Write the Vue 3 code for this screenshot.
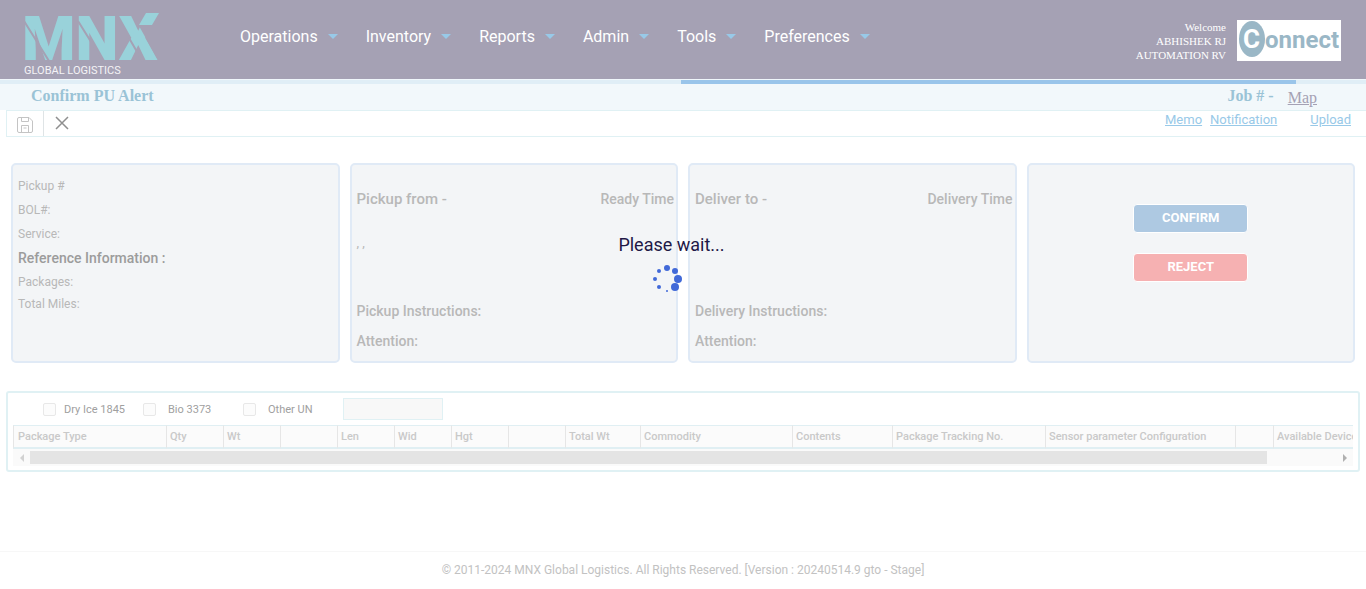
<script setup>
import { ref } from 'vue'

const menu = ['Operations', 'Inventory', 'Reports', 'Admin', 'Tools', 'Preferences']
const columns = [
  { label: 'Package Type', width: 153 },
  { label: 'Qty', width: 57 },
  { label: 'Wt', width: 57 },
  { label: '', width: 57 },
  { label: 'Len', width: 57 },
  { label: 'Wid', width: 57 },
  { label: 'Hgt', width: 57 },
  { label: '', width: 57 },
  { label: 'Total Wt', width: 75 },
  { label: 'Commodity', width: 152 },
  { label: 'Contents', width: 100 },
  { label: 'Package Tracking No.', width: 153 },
  { label: 'Sensor parameter Configuration', width: 190 },
  { label: '', width: 38 },
  { label: 'Available Devices', width: 152 },
]
const stops = [
  { title: 'Pickup from -', time: 'Ready Time', address: ', ,', instructions: 'Pickup Instructions:' },
  { title: 'Deliver to -', time: 'Delivery Time', address: '', instructions: 'Delivery Instructions:' },
]
const dots = [
  { x: 14, y: 4, r: 3 },
  { x: 22, y: 7, r: 3 },
  { x: 25, y: 15, r: 4 },
  { x: 22, y: 23, r: 4 },
  { x: 14, y: 27, r: 1 },
  { x: 6, y: 23, r: 2 },
  { x: 2, y: 15, r: 2 },
  { x: 6, y: 7, r: 2 },
]
const otherUn = ref('')
</script>

<template>
  <div class="page">
    <header class="header">
      <svg class="logo" width="150" height="79" viewBox="-5 -10 150 79" role="img" aria-label="MNX Global Logistics">
        <text class="logo-name" x="-3" y="50">MNX</text>
        <path class="logo-cut" d="M-1 11 L24 51 M53 11 L78 51 M104 28 L118 52" />
        <path class="logo-gap" d="M109 0 V7 L133 50 H142 V0 Z" />
        <path class="logo-accent" d="M121 3 H134 L127 15 H114 Z" />
        <text class="logo-sub" x="-1" y="64">GLOBAL LOGISTICS</text>
      </svg>
      <nav class="menu">
        <a v-for="item in menu" :key="item" href="#" class="menu-item">{{ item }}<span class="caret"></span></a>
      </nav>
      <div class="user">
        <div>Welcome</div>
        <div>ABHISHEK RJ</div>
        <div>AUTOMATION RV</div>
      </div>
      <svg class="brand" width="104" height="41" viewBox="0 0 104 41" role="img" aria-label="Connect">
        <rect width="104" height="41" fill="#fff" />
        <ellipse cx="15" cy="19" rx="13" ry="18" fill="#9ab7c6" />
        <text class="brand-c" x="6" y="28">C</text>
        <text class="brand-text" x="28" y="28">onnect</text>
      </svg>
    </header>

    <div class="progress"><div class="progress-bar"></div></div>

    <div class="titlebar">
      <h1 class="title">Confirm PU Alert</h1>
      <span class="job">Job # -</span>
      <a href="#" class="map">Map</a>
    </div>

    <div class="toolbar">
      <button class="tool save" type="button" aria-label="Save">
        <svg width="16" height="16" viewBox="0 0 16 16" fill="none" stroke="#c4c4c4">
          <path d="M2 .5 H12 L15.5 4 V14 Q15.5 15.500 14 15.500 H2 Q.5 15.500 .5 14 V2 Q.5 .5 2 .5 Z M4.500 .5 V4.500 H11.500 V.5 M4.500 15.500 V8.500 H11.500 V15.500 M6.500 11 H9.500" />
        </svg>
      </button>
      <button class="tool close" type="button" aria-label="Close">
        <svg width="14" height="14" viewBox="0 0 14 14" fill="none" stroke="#8f8f8f" stroke-width="1.500">
          <path d="M1 1 L13 13 M13 1 L1 13" />
        </svg>
      </button>
      <div class="links">
        <a href="#">Memo</a>
        <a href="#">Notification</a>
        <a href="#" class="upload">Upload</a>
      </div>
    </div>

    <main>
      <section class="cards">
        <div class="card summary">
          <div>Pickup #</div>
          <div>BOL#:</div>
          <div>Service:</div>
          <div class="reference">Reference Information :</div>
          <div>Packages:</div>
          <div class="miles">Total Miles:</div>
        </div>
        <div v-for="stop in stops" :key="stop.title" class="card stop">
          <div class="stop-head">
            <span class="stop-title">{{ stop.title }}</span>
            <span>{{ stop.time }}</span>
          </div>
          <div class="address">{{ stop.address }}</div>
          <div class="stop-line">{{ stop.instructions }}</div>
          <div class="stop-line">Attention:</div>
        </div>
        <div class="card actions">
          <button type="button" class="action confirm">CONFIRM</button>
          <button type="button" class="action reject">REJECT</button>
        </div>
      </section>

      <section class="packages">
        <div class="options">
          <label class="dry"><input type="checkbox" />Dry Ice 1845</label>
          <label class="bio"><input type="checkbox" />Bio 3373</label>
          <label class="other"><input type="checkbox" />Other UN</label>
          <input v-model="otherUn" class="un" type="text" aria-label="Other UN number" />
        </div>
        <div class="table-wrap">
          <table class="table">
            <colgroup>
              <col v-for="(c, i) in columns" :key="i" :style="{ width: c.width + 'px' }" />
            </colgroup>
            <thead>
              <tr>
                <th v-for="(c, i) in columns" :key="i" scope="col">{{ c.label }}</th>
              </tr>
            </thead>
          </table>
        </div>
        <div class="scrollbar">
          <span class="arrow left"></span>
          <div class="track"><div class="thumb"></div></div>
          <span class="arrow right"></span>
        </div>
      </section>
    </main>

    <footer class="footer">© 2011-2024 MNX Global Logistics. All Rights Reserved. [Version : 20240514.9 gto - Stage]</footer>

    <div class="overlay" role="status">
      <div class="wait">Please wait...</div>
      <svg width="30" height="30" viewBox="0 0 30 30" fill="#4169d8">
        <circle v-for="(d, i) in dots" :key="i" :cx="d.x" :cy="d.y" :r="d.r" />
      </svg>
    </div>
  </div>
</template>

<style>
body {
  margin: 0;
  background: #fff;
}
</style>

<style scoped>
.page {
  position: relative;
  min-height: 100vh;
  display: flex;
  flex-direction: column;
  overflow: hidden;
  font-family: Roboto, "Liberation Sans", sans-serif;
  font-size: 12px;
  color: #b8b8b8;
}
.page * {
  box-sizing: border-box;
}
.header {
  display: flex;
  align-items: flex-start;
  height: 79px;
  padding: 0 25px 0 20px;
  background: #a5a1b4;
}
.logo {
  flex: none;
}
.logo-name {
  font: 900 61px Roboto, sans-serif;
  fill: #99d2da;
}
.logo-cut {
  stroke: #a5a1b4;
  stroke-width: 2;
}
.logo-gap {
  fill: #a5a1b4;
}
.logo-accent {
  fill: #99d2da;
}
.logo-sub {
  font: 400 11px Roboto, sans-serif;
  fill: #f4f3f6;
}
.menu {
  display: flex;
  gap: 28px;
  margin: 26px auto 0 70px;
}
.menu-item {
  display: flex;
  align-items: center;
  color: #fff;
  font-size: 16px;
  line-height: 21px;
  text-decoration: none;
}
.caret {
  margin-left: 10px;
  border: 5px solid transparent;
  border-top-color: #98c9e8;
  border-bottom-width: 0;
}
.user {
  margin: 20px 11px 0 0;
  color: #fff;
  text-align: right;
  font: 11px/14px "Liberation Serif", serif;
}
.brand {
  margin-top: 20px;
  flex: none;
}
.brand-c {
  font: bold 26px Roboto, sans-serif;
  fill: #fff;
}
.brand-text {
  font: bold 24px Roboto, sans-serif;
  fill: #9ab7c6;
}
.progress {
  height: 5px;
  border-top: 1px solid #f0f7fb;
  background: #e0eef6;
}
.progress-bar {
  width: 45%;
  height: 4px;
  margin-left: 49.870%;
  background: #9ac5ea;
}
.titlebar {
  display: flex;
  height: 26px;
  padding: 0 49px 0 31px;
  background: #f2f8fb;
  color: #9ac3d6;
  font: 16px/24px "Liberation Serif", serif;
}
.title {
  margin: 0 auto 0 0;
  font: inherit;
  font-weight: bold;
}
.job {
  margin-right: 14px;
  font-weight: bold;
}
.map {
  line-height: 28px;
  color: #a5a1b4;
}
.toolbar {
  display: flex;
  height: 27px;
  margin-left: 6px;
  border: solid #e0f1f4;
  border-width: 1px 0 1px 1px;
}
.tool {
  width: 37px;
  padding: 0;
  border: 0;
  background: none;
  display: flex;
  align-items: center;
  justify-content: center;
}
.save {
  padding-top: 3px;
  border-right: 1px solid #dfe4e6;
}
.close {
  padding: 0 1px 1px 0;
}
.links {
  display: flex;
  gap: 8px;
  margin-left: auto;
  padding-right: 15px;
  font-size: 13px;
  line-height: 17px;
}
.links a {
  color: #98c9e8;
}
.links .upload {
  margin-left: 25px;
}
.cards {
  display: grid;
  grid-template-columns: repeat(4, 1fr);
  gap: 10px;
  padding: 26px 11px 28px;
}
.card {
  min-height: 200px;
  border: 2px solid #e0eaf6;
  border-radius: 5px;
  background: #f3f5f7;
}
.summary {
  padding: 9px 5px;
  line-height: 24px;
}
.reference {
  font-size: 14px;
  font-weight: 500;
  color: #9c9c9c;
}
.miles {
  line-height: 20px;
}
.stop {
  padding: 24px 2px 0 5px;
  font-size: 14px;
  font-weight: 500;
  line-height: 20px;
}
.stop-head {
  display: flex;
  justify-content: space-between;
}
.stop-title {
  font-size: 15px;
}
.address {
  height: 87px;
  padding-top: 24px;
  font-size: 13px;
  font-weight: 400;
}
.stop-line {
  line-height: 30px;
}
.actions {
  display: flex;
  flex-direction: column;
  align-items: center;
  gap: 20px;
  padding-top: 39px;
}
.action {
  width: 115px;
  height: 29px;
  padding: 0 0 2px;
  border: 1px solid #fff;
  border-radius: 4px;
  color: #fff;
  font: bold 13px Roboto, sans-serif;
}
.confirm {
  background: #aec9e2;
}
.reject {
  background: #f6b1b2;
}
.packages {
  margin: 0 6px;
  padding: 5px 5px 4px;
  border: 2px solid #e0f1f4;
  border-radius: 3px;
}
.options {
  display: flex;
  align-items: center;
  height: 27px;
  padding: 0 0 5px 30px;
  color: #a0a0a0;
  font-size: 11px;
}
.options label {
  display: flex;
  align-items: center;
}
.options [type="checkbox"] {
  appearance: none;
  width: 13px;
  height: 13px;
  margin: 0 12px 0 0;
  border: 1px solid #e8e8e8;
  border-radius: 2px;
  background: #fcfcfc;
}
.dry {
  width: 100px;
}
.dry [type="checkbox"] {
  margin-right: 8px;
}
.bio {
  width: 100px;
}
.other {
  width: 100px;
}
.un {
  width: 100px;
  height: 22px;
  border: 1px solid #e0f1f4;
  background: #f8f8f8;
}
.table-wrap {
  overflow: hidden;
}
.table {
  width: 1412px;
  table-layout: fixed;
  border-collapse: separate;
  border-spacing: 0;
}
.table th {
  height: 24px;
  padding: 0 3px;
  border: solid #e0eff3;
  border-width: 1px 0 2px;
  border-left: 1px solid #e6e6e6;
  background: #fbfbfb;
  color: #c9c9c9;
  font-size: 11px;
  font-weight: 500;
  line-height: 21px;
  text-align: left;
  white-space: nowrap;
}
.table th:first-child {
  padding-left: 4px;
}
.scrollbar {
  display: flex;
  align-items: center;
  height: 17px;
  background: #fafafa;
}
.track {
  flex: 1;
}
.thumb {
  width: 94.7%;
  height: 13px;
  background: #e4e4e4;
}
.arrow {
  width: 17px;
  display: flex;
  justify-content: center;
}
.arrow::before {
  content: "";
  border: 4px solid transparent;
}
.left::before {
  border-left-width: 0;
  border-right-color: #d2d2d2;
}
.right::before {
  border-right-width: 0;
  border-left-color: #b0b0b0;
}
.footer {
  margin-top: auto;
  height: 38px;
  border-top: 1px solid #f7f7f7;
  line-height: 36px;
  text-align: center;
  color: #c2c2c2;
}
.overlay {
  position: absolute;
  inset: 0;
  display: flex;
  flex-direction: column;
  align-items: center;
  padding: 234px 23px 0 0;
  pointer-events: none;
}
.overlay svg {
  margin: 8px 0 0 -8px;
}
.wait {
  color: #1f1846;
  font-size: 18px;
  line-height: 22px;
}
</style>
